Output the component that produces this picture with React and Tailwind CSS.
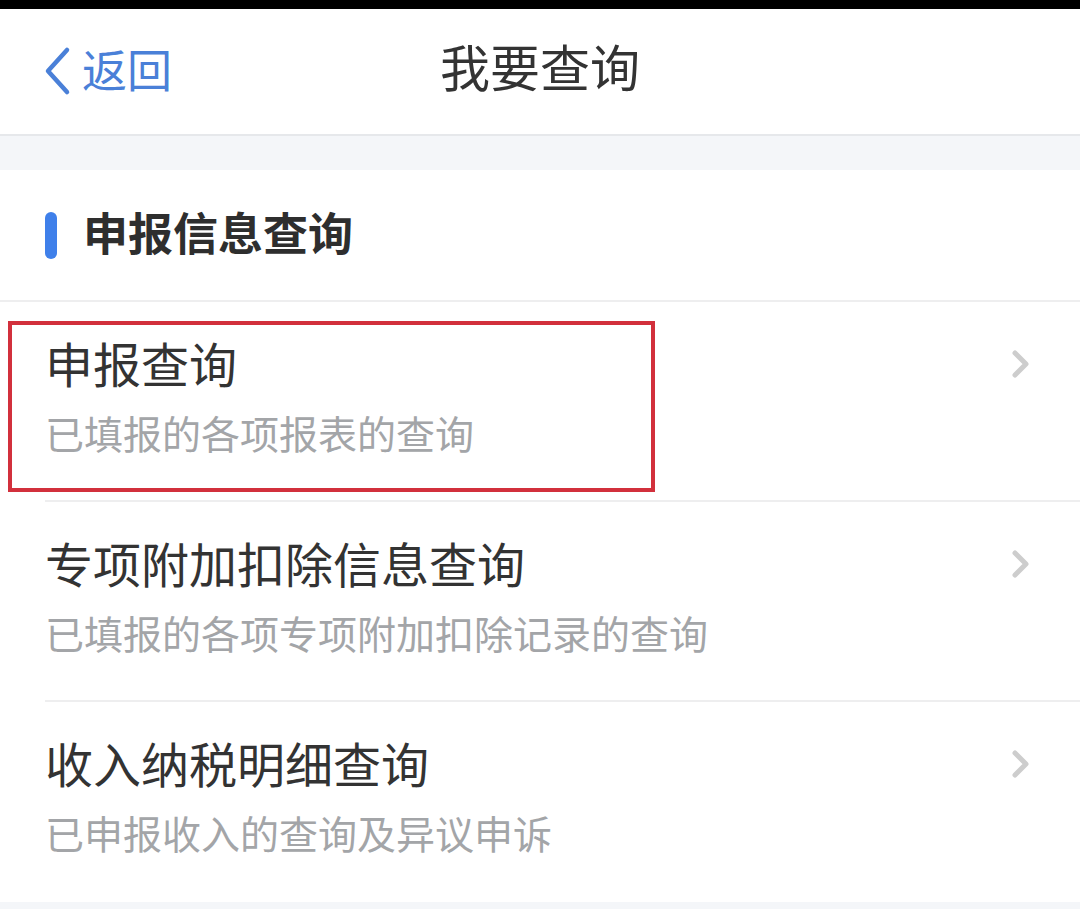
import React from "react";

const items = [
  { title: "申报查询", sub: "已填报的各项报表的查询", boxed: true },
  { title: "专项附加扣除信息查询", sub: "已填报的各项专项附加扣除记录的查询" },
  { title: "收入纳税明细查询", sub: "已申报收入的查询及异议申诉" },
];

function Chevron() {
  return (
    <svg width="22" height="30" viewBox="0 0 22 30" className="shrink-0">
      <path d="M5 4 L16 15 L5 26" fill="none" stroke="#cdcdcd" strokeWidth="5" strokeLinecap="round" strokeLinejoin="round" />
    </svg>
  );
}

export default function App() {
  return (
    <div
      className="w-[1080px] h-[909px] bg-[#f4f6f9] overflow-hidden flex flex-col"
      style={{ fontFamily: '"Noto Sans CJK SC", "Noto Sans", sans-serif' }}
    >
      <div className="h-[9px] bg-black shrink-0" />
      <header className="h-[127px] shrink-0 bg-white border-b-2 border-[#e6e8eb] relative flex items-center justify-center">
        <div className="absolute left-[42px] top-0 h-full flex items-center gap-[8px] pb-[6px]">
          <svg width="32" height="50" viewBox="0 0 32 50" className="mt-[4px]">
            <path d="M25 4 L6 25 L25 46" fill="none" stroke="#4a80d8" strokeWidth="4.5" strokeLinecap="round" strokeLinejoin="round" />
          </svg>
          <span className="text-[45px] leading-none text-[#4a80d8]">返回</span>
        </div>
        <h1 className="text-[50px] leading-none text-[#333333] pb-[14px]">我要查询</h1>
      </header>
      <div className="h-[34px] shrink-0" />
      <section className="bg-white">
        <div className="h-[132px] flex items-center border-b-2 border-[#eeeeef]">
          <div className="ml-[45px] w-[12px] h-[47px] rounded-full bg-[#3f80ea]" />
          <h2 className="ml-[26px] text-[45px] leading-none font-bold text-[#2e2e2e] mb-[8px]">申报信息查询</h2>
        </div>
        {items.map((it, i) => (
          <div key={i} className="relative pl-[45px]">
            <div
              className={
                "h-[200px] flex items-start pr-[48px] pt-[36px] " +
                (i < items.length - 1 ? "border-b-2 border-[#eeeeef]" : "")
              }
            >
              <div className="flex-1 flex flex-col">
                <div className="text-[48px] leading-[48px] text-[#333333]">{it.title}</div>
                <div className="mt-[27px] text-[39px] leading-[39px] text-[#a3a5a8]">{it.sub}</div>
              </div>
              <div className="mt-[11px]">
                <Chevron />
              </div>
            </div>
            {it.boxed && (
              <div className="absolute left-[8px] top-[19px] w-[647px] h-[171px] border-4 border-[#d2303c] pointer-events-none" />
            )}
          </div>
        ))}
      </section>
    </div>
  );
}
